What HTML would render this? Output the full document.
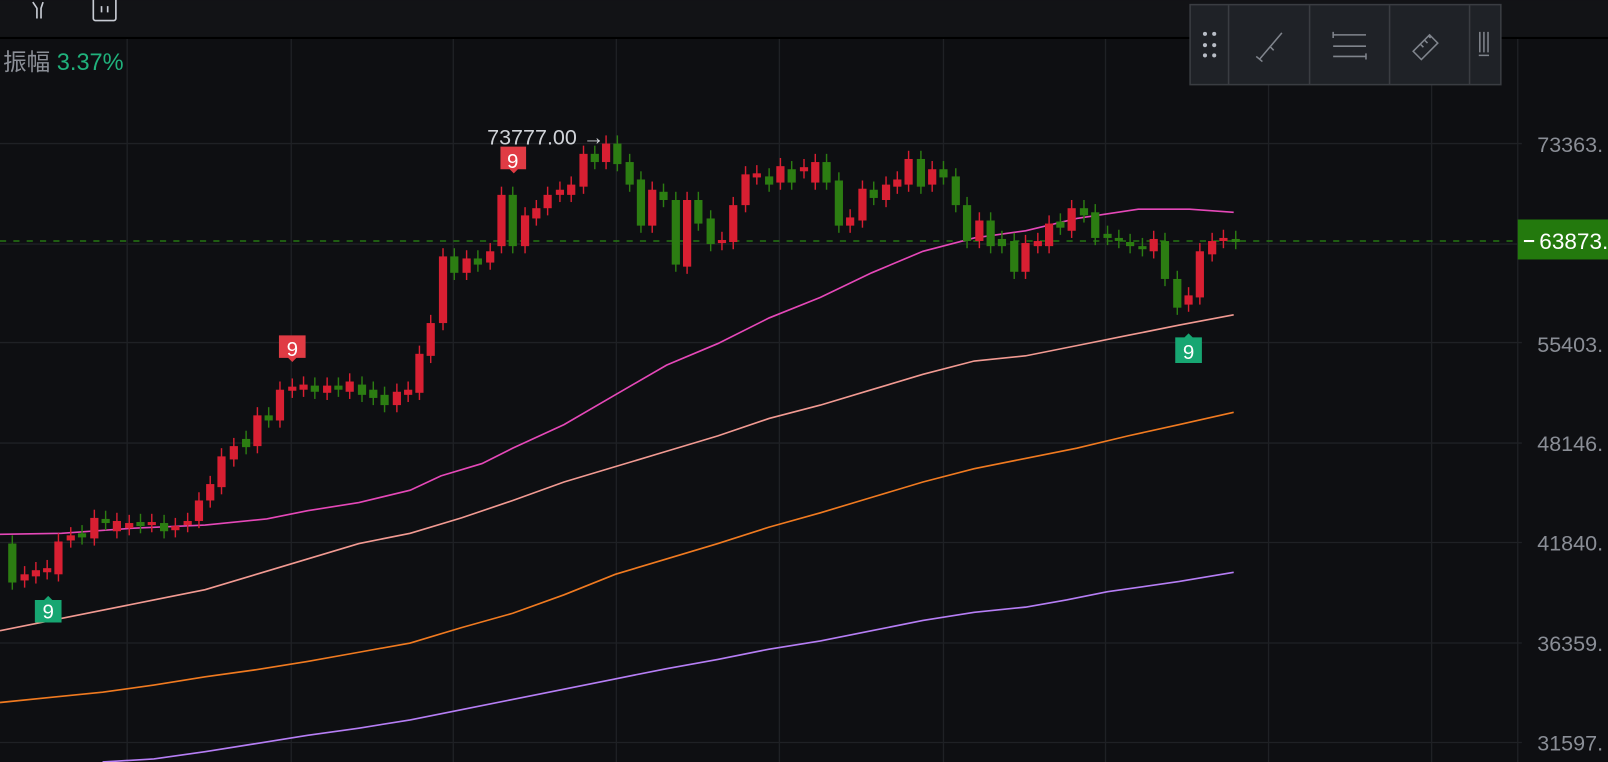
<!DOCTYPE html>
<html><head><meta charset="utf-8"><style>
html,body{margin:0;padding:0;background:#0e0f12;overflow:hidden}
svg{display:block}
text{font-family:"Liberation Sans","Noto Sans CJK SC",sans-serif}
</style></head><body>
<svg id="s" width="1608" height="762" viewBox="0 0 1568 743" xmlns="http://www.w3.org/2000/svg">
<rect width="1568" height="743" fill="#0e0f12"/>
<rect width="1568" height="37" fill="#121316"/>
<rect y="36" width="1568" height="2" fill="#000"/>
<g stroke="#1f2125" stroke-width="1.3">
<line x1="124" y1="38" x2="124" y2="743"/><line x1="284" y1="38" x2="284" y2="743"/><line x1="442" y1="38" x2="442" y2="743"/><line x1="601" y1="38" x2="601" y2="743"/><line x1="760" y1="38" x2="760" y2="743"/><line x1="920" y1="38" x2="920" y2="743"/><line x1="1078" y1="38" x2="1078" y2="743"/><line x1="1237" y1="38" x2="1237" y2="743"/><line x1="1396" y1="38" x2="1396" y2="743"/><line x1="1480" y1="38" x2="1480" y2="743"/>
<line x1="0" y1="140" x2="1484" y2="140"/><line x1="0" y1="238" x2="1484" y2="238"/><line x1="0" y1="334" x2="1484" y2="334"/><line x1="0" y1="432" x2="1484" y2="432"/><line x1="0" y1="529" x2="1484" y2="529"/><line x1="0" y1="627" x2="1484" y2="627"/><line x1="0" y1="724" x2="1484" y2="724"/>
</g>
<g fill="none" stroke="#c8ccd4" stroke-width="1.6">
<path d="M32 2 L36 8 L36 18 M42 2 L40 8 L40 18"/>
<rect x="91" y="-4" width="22" height="24" rx="2"/><path d="M99 6v6M105 6v6"/>
</g>
<text x="3" y="68" font-size="23" fill="#8b8f97">振幅 <tspan fill="#20b27c">3.37%</tspan></text>
<line x1="0" y1="235" x2="1480" y2="235" stroke="#2a8a12" stroke-width="1.3" stroke-dasharray="6,7"/>
<g font-size="21" fill="#8a8e96">
<text x="1499" y="148">73363.</text><text x="1499" y="343">55403.</text><text x="1499" y="440">48146.</text><text x="1499" y="537">41840.</text><text x="1499" y="635">36359.</text><text x="1499" y="732">31597.</text>
</g>
<g fill="none" stroke-width="1.6">
<polyline stroke="#e548b8" points="0,521 60,520 130,515 200,512 260,506 300,498 350,490 400,478 430,464 470,452 500,437 550,414 600,385 650,356 700,335 750,310 800,290 850,266 900,245 950,232 1000,225 1050,213 1110,204 1160,204 1203,207"/>
<polyline stroke="#f29a92" points="0,615 50,605 100,595 150,585 200,575 250,560 300,545 350,530 400,520 450,505 500,488 550,470 600,455 650,440 700,425 750,408 800,395 850,380 900,365 950,352 1000,347 1050,337 1100,327 1150,317 1203,307"/>
<polyline stroke="#f07a20" points="0,685 50,680 100,675 150,668 200,660 250,653 300,645 350,636 400,627 450,612 500,598 550,580 600,560 650,545 700,530 750,514 800,500 850,485 900,470 950,457 1000,447 1050,437 1100,425 1150,414 1203,402"/>
<polyline stroke="#b67ef5" points="100,743 150,740 200,733 250,725 300,717 350,710 400,702 450,692 500,682 550,672 600,662 650,652 700,643 750,633 800,625 850,615 900,605 950,597 1000,592 1040,585 1080,577 1150,567 1203,558"/>
</g>
<g id="c"></g>
<g font-size="20" fill="#fff" text-anchor="middle">
<path d="M272 327h26v22h-9l-4 4-4-4h-9z" fill="#e03b44"/><text x="285" y="347">9</text>
<path d="M488 143h25v22h-8l-4 4-4-4h-9z" fill="#e03b44"/><text x="500" y="164">9</text>
<path d="M34 585h9l4-4 4 4h9v22h-26z" fill="#17a672"/><text x="47" y="603">9</text>
<path d="M1146 329h9l4-4 4 4h9v25h-26z" fill="#17a672"/><text x="1159" y="350">9</text>
</g>
<text x="475" y="141" font-size="21" fill="#d0d3d8">73777.00 →</text>
<rect x="1480" y="214" width="88" height="39" fill="#23790d"/>
<line x1="1486" y1="235" x2="1496" y2="235" stroke="#fff" stroke-width="2"/>
<text x="1501" y="243" font-size="22" fill="#fff">63873.</text>
<rect x="1160.5" y="4.5" width="303" height="78" fill="#1f2227" stroke="#3a3d42" stroke-width="1.5"/>
<g stroke="#3a3d42" stroke-width="1.5"><line x1="1198" y1="5" x2="1198" y2="82"/><line x1="1277" y1="5" x2="1277" y2="82"/><line x1="1355" y1="5" x2="1355" y2="82"/><line x1="1433" y1="5" x2="1433" y2="82"/></g>
<g fill="#b8bdc6"><circle cx="1175" cy="33" r="2"/><circle cx="1184" cy="33" r="2"/><circle cx="1175" cy="44" r="2"/><circle cx="1184" cy="44" r="2"/><circle cx="1175" cy="54" r="2"/><circle cx="1184" cy="54" r="2"/></g>
<g fill="none" stroke="#80858d" stroke-width="1.5">
<path d="M1228 58 L1250 32 M1225 55l6 5 M1238 45l4 4"/>
<path d="M1300 34h32M1300 45h32M1300 55h32M1300 31v6M1332 52v6"/>
<path d="M1378 50l16-16 8 8-16 16z M1385 43l3 3 M1389 39l3 3 M1393 35l2 2"/>
<path d="M1443 31v20M1447 31v20M1451 31v20M1442 54h10"/>
</g>
</svg>
<script>
var d=[[12,'g',530,568],[24,'r',560,566],[35,'r',556,562],[46,'r',554,558],[57,'r',528,560],[69,'r',522,527],[80,'g',520,524],[92,'r',505,525],[103,'g',506,510],[114,'r',508,518],[126,'r',510,515],[137,'g',509,513],[148,'r',509,512],[160,'g',510,518],[171,'r',513,517],[183,'r',508,512],[194,'r',488,508],[205,'r',472,488],[216,'r',445,475],[228,'r',435,448],[240,'g',428,436],[251,'r',405,435],[262,'g',405,410],[273,'r',380,410],[285,'r',377,381],[296,'r',375,380],[307,'g',376,382],[319,'r',376,383],[330,'g',376,380],[341,'r',372,382],[353,'g',375,385],[364,'g',380,388],[375,'g',385,395],[387,'r',382,395],[398,'r',380,385],[409,'r',345,383],[420,'r',315,347],[432,'r',250,315],[443,'g',250,266],[455,'r',252,266],[466,'g',252,258],[478,'r',245,256],[489,'r',190,240],[500,'g',190,240],[512,'r',210,240],[523,'r',203,213],[534,'r',190,203],[546,'r',185,190],[557,'r',180,190],[569,'r',150,182],[580,'g',150,158],[591,'r',140,158],[602,'g',140,160],[614,'g',158,180],[625,'g',175,220],[636,'r',185,220],[647,'g',187,195],[659,'g',195,258],[670,'r',195,260],[681,'g',195,218],[693,'g',213,238],[704,'r',234,237],[715,'r',200,236],[727,'r',170,200],[738,'r',169,173],[750,'g',172,180],[761,'r',162,178],[772,'g',165,178],[784,'r',163,167],[795,'r',158,178],[806,'g',158,178],[818,'g',176,220],[829,'r',212,220],[841,'r',184,215],[852,'g',185,193],[864,'r',180,195],[875,'r',175,182],[886,'r',155,180],[898,'g',155,182],[909,'r',165,180],[920,'g',165,173],[932,'g',172,200],[943,'g',200,235],[955,'r',215,235],[966,'g',215,240],[977,'g',233,240],[989,'g',235,265],[1000,'r',237,265],[1012,'r',235,240],[1023,'r',218,240],[1034,'g',216,222],[1045,'r',203,225],[1057,'g',203,210],[1068,'g',207,232],[1080,'g',228,232],[1091,'g',232,235],[1102,'g',236,240],[1114,'g',240,243],[1125,'r',233,245],[1136,'g',235,272],[1148,'g',272,300],[1159,'r',288,297],[1170,'r',245,290],[1182,'r',235,248],[1193,'r',232,235],[1205,'g',233,236]];
var h='';d.forEach(function(c){var col=c[1]=='r'?'#d81f32':'#2c7d12';var t=c[2],b=c[3];h+='<line x1="'+c[0]+'" x2="'+c[0]+'" y1="'+(t-8)+'" y2="'+(b+7)+'" stroke="'+col+'" stroke-width="1.4"/><rect x="'+(c[0]-4)+'" y="'+t+'" width="8" height="'+Math.max(2,b-t)+'" fill="'+col+'"/>';});
document.getElementById('c').innerHTML=h;
</script>
</body></html>
